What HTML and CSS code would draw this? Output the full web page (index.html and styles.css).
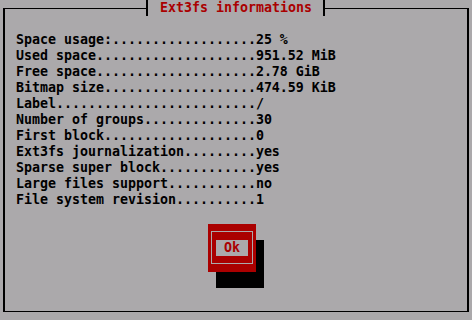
FILE: index.html
```html
<!DOCTYPE html>
<html>
<head>
<meta charset="utf-8">
<link rel="stylesheet" href="styles.css">
</head>
<body>
<div class="frame">
  <div class="title"><span class="title-text">Ext3fs informations</span></div>
  <div class="rows">
    <div class="row">Space usage:..................25 %</div>
    <div class="row">Used space....................951.52 MiB</div>
    <div class="row">Free space....................2.78 GiB</div>
    <div class="row">Bitmap size...................474.59 KiB</div>
    <div class="row">Label........................./</div>
    <div class="row">Number of groups..............30</div>
    <div class="row">First block...................0</div>
    <div class="row">Ext3fs journalization.........yes</div>
    <div class="row">Sparse super block............yes</div>
    <div class="row">Large files support...........no</div>
    <div class="row">File system revision..........1</div>
  </div>
  <div class="btn-wrap">
    <div class="ok-btn">
      <div class="ok-frame">
        <div class="ok-label">Ok</div>
      </div>
    </div>
  </div>
</div>
</body>
</html>
```
FILE: styles.css
```css
html, body {
  margin: 0;
  padding: 0;
  background: #aba9ab;
}
body {
  width: 472px;
  height: 320px;
  overflow: hidden;
  font-family: "DejaVu Sans Mono", "Liberation Mono", monospace;
  font-size: 13.29px;
  font-weight: bold;
  line-height: 16px;
  color: #000;
}
.frame {
  position: relative;
  box-sizing: border-box;
  margin: 8px 0 0 3px;
  width: 466px;
  height: 304px;
  border-top: 1px solid #000;
  border-bottom: 1px solid #000;
  border-left: 2px solid #000;
  border-right: 2px solid #000;
  padding: 23px 0 0 11px;
}
.title {
  position: absolute;
  left: 141px;
  top: -9px;
  box-sizing: border-box;
  width: 179px;
  height: 16px;
  border-left: 2px solid #000;
  border-right: 2px solid #000;
  background: #aba9ab;
  padding-left: 12px;
  color: #aa0000;
  white-space: pre;
}
.rows {
  display: flex;
  flex-direction: column;
}
.row {
  height: 16px;
  white-space: pre;
}
.btn-wrap {
  margin-top: 16px;
  padding-left: 192px;
}
.ok-btn {
  box-sizing: border-box;
  width: 48px;
  height: 48px;
  background: #aa0000;
  padding: 7px 3px 0 3px;
  box-shadow: 8px 16px 0 #000;
}
.ok-frame {
  box-sizing: border-box;
  width: 42px;
  height: 33px;
  border: 1px solid #aba9ab;
  padding: 8px 0 0 4px;
}
.ok-label {
  width: 32px;
  height: 16px;
  background: #aba9ab;
  color: #aa0000;
  text-align: center;
}
```
